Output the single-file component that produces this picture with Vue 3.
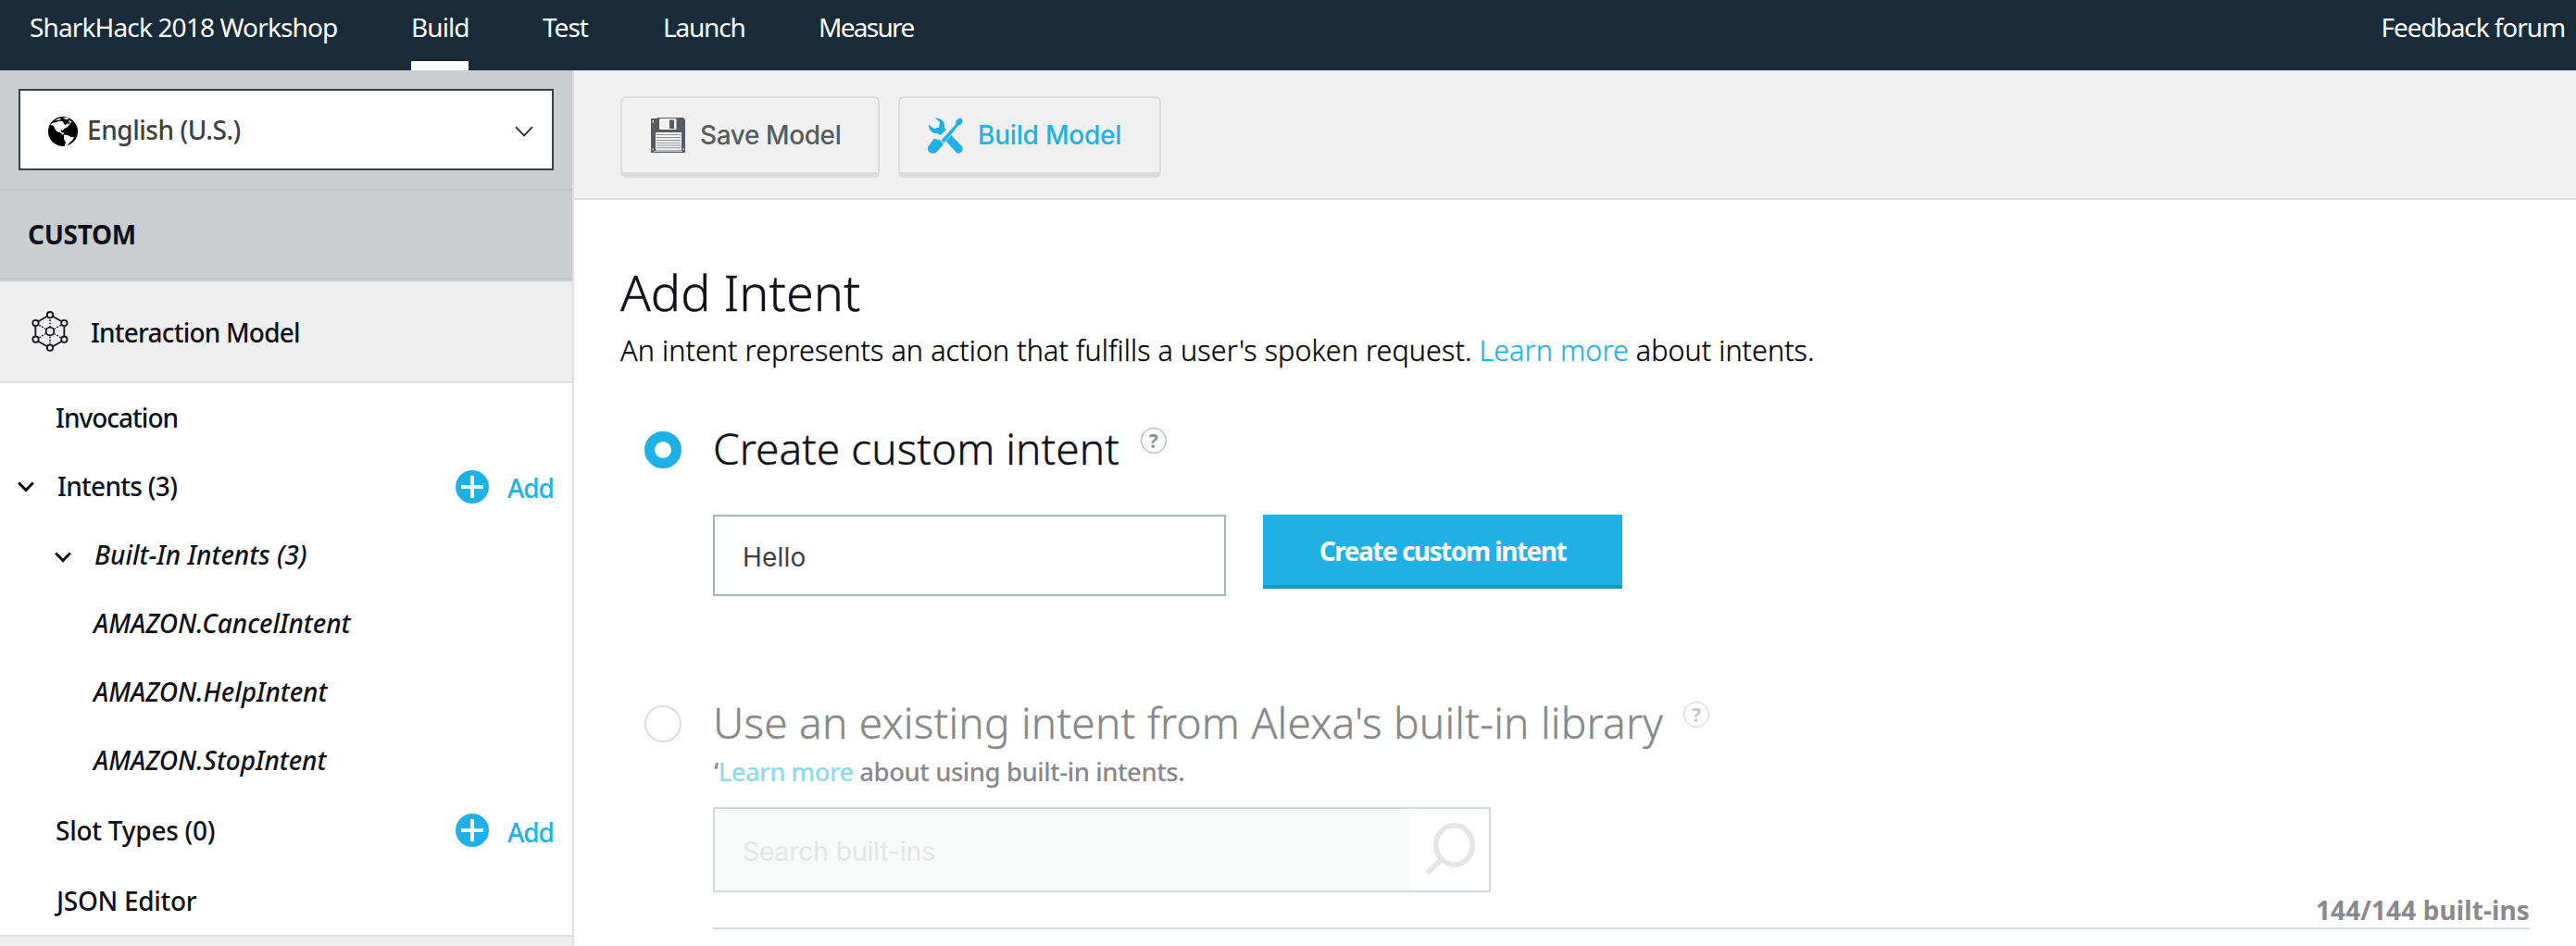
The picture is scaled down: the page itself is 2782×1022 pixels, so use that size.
<script setup>
import { ref } from 'vue'

const tabs = [
  { label: 'Build', cls: 'tab-build', active: true },
  { label: 'Test', cls: 'tab-test' },
  { label: 'Launch', cls: 'tab-launch' },
  { label: 'Measure', cls: 'tab-measure' },
]

const items = [
  { label: 'Invocation', cls: 'invocation' },
  { label: 'Intents (3)', cls: 'intents', open: true, add: true },
  { label: 'Built-In Intents (3)', cls: 'builtin', open: true },
  { label: 'AMAZON.CancelIntent', cls: 'leaf' },
  { label: 'AMAZON.HelpIntent', cls: 'leaf' },
  { label: 'AMAZON.StopIntent', cls: 'leaf' },
  { label: 'Slot Types (0)', cls: 'slots', add: true },
  { label: 'JSON Editor', cls: 'json' },
]

const intentName = ref('Hello')
</script>

<template>
  <div class="app">
    <header class="topbar">
      <span class="brand">SharkHack 2018 Workshop</span>
      <nav class="tabs">
        <a v-for="t in tabs" :key="t.label" class="tab" :class="[t.cls, { active: t.active }]">{{ t.label }}</a>
      </nav>
      <a class="feedback">Feedback forum</a>
    </header>

    <div class="body">
      <aside class="sidebar">
        <div class="lang">
          <div class="select">
            <svg class="globe" width="32" height="32" viewBox="0 0 96 96">
              <circle cx="48" cy="48" r="48" fill="#000" />
              <path fill="#fff" d="M7 27 L14 20 L24 19 L34 15 L45 14 L51 20 L61 17 L72 21 L67 29 L60 35 L52 39 L47 45 L43 43 L40 48 L45 52 L53 53 L48 59 L39 52 L29 49 L21 39 L18 29 Z" />
              <path fill="#fff" d="M22 13 L35 6 L43 6 L36 11 Z M47 4 L62 3 L68 8 L57 9 Z M67 11 L76 16 L73 22 L68 17 Z M51 59 L62 59 L72 65 L84 67 L78 78 L70 84 L61 95 L53 96 L57 83 L51 73 Z" />
              <path d="M51 23 L60 14 L66 21 L60 20 L54 26" fill="none" stroke="#000" stroke-width="4" />
            </svg>
            <span class="lang-text">English (U.S.)</span>
            <svg class="lang-chev" width="20" height="12" viewBox="0 0 20 12">
              <path d="M1 1.2 L10 10.4 L19 1.2" fill="none" stroke="#222a2c" stroke-width="1.8" />
            </svg>
          </div>
        </div>
        <div class="custom">CUSTOM</div>
        <div class="model">
          <svg width="40" height="44" viewBox="0 0 120 132" fill="none" stroke="#16161f" stroke-width="5.5">
            <path d="M51 17 L22 34 M69 17 L98 34 M106 50 V82 M98 98 L69 115 M51 115 L22 98 M13 50 V82" />
            <path d="M60 28 V51 M60 83 V106 M25 46 L46 58 M95 46 L74 58 M25 86 L46 74 M95 86 L74 74" stroke-width="4.5" stroke-dasharray="5 5" />
            <circle cx="60" cy="12.500" r="9.500" /><circle cx="106" cy="39" r="9.500" />
            <circle cx="106" cy="92" r="9.500" /><circle cx="60" cy="119" r="9.500" />
            <circle cx="13.500" cy="92" r="9.500" /><circle cx="13.500" cy="39" r="9.500" />
            <circle cx="60" cy="66" r="13" />
          </svg>
          <span>Interaction Model</span>
        </div>
        <ul class="tree">
          <li v-for="i in items" :key="i.label" class="item" :class="i.cls">
            <svg v-if="i.open" class="chev" width="18" height="12" viewBox="0 0 18 12">
              <path d="M1.200 1.500 L9 9.500 L16.800 1.500" fill="none" stroke="#101018" stroke-width="3" />
            </svg>
            <span class="label">{{ i.label }}</span>
            <a v-if="i.add" class="add">
              <svg width="36" height="36" viewBox="0 0 36 36">
                <circle cx="18" cy="18" r="18" fill="#1fb1e6" />
                <path d="M18 6 V30 M6 18 H30" stroke="#fff" stroke-width="4" />
              </svg>
              <span>Add</span>
            </a>
          </li>
        </ul>
        <div class="rest"></div>
      </aside>

      <main class="main">
        <div class="toolbar">
          <button class="tool save">
            <svg width="38" height="39" viewBox="0 0 38 39">
              <path fill="#565b5f" d="M0 1 H6 L8 0 H35 L37 2 V38 H0 Z" />
              <rect x="9" y="1" width="18.500" height="12" rx="1" fill="#f1f1f1" />
              <rect x="20" y="2.500" width="5" height="9.500" fill="#565b5f" />
              <rect x="5" y="16" width="28" height="19.500" fill="#f4f4f4" />
              <path d="M6 18.500 H32 M6 21.500 H32 M6 24.500 H32 M6 27.300 H32 M6 30 H32 M6 32.700 H32" stroke="#8d9093" stroke-width="1.100" />
              <path d="M1.500 3 H3 V5.500 H1.500 Z M1.500 33.500 H3 V35 H1.500 Z M34.500 33.500 H36 V35 H34.500 Z M3 36.300 H34 V37 H3 Z" fill="#e4e4e4" />
            </svg>
            <span>Save Model</span>
          </button>
          <button class="tool build">
            <svg width="38" height="39" viewBox="0 0 38 39" fill="#1fb1e6">
              <path d="M8 0.500 C14 0 18.500 4 18 10.500 L19.500 14 L13.500 19 L10.500 17.200 C4.500 17.500 1 13.500 1 7.500 L6.500 12 L12 10.500 L13 5 Z" />
              <path d="M18 23.500 L24.500 18.200 L37 31.500 C39 35 36 39.500 31.500 38.500 Z" />
              <path d="M36.500 1 L37.500 3 L36.500 7 L32.500 9 L17.500 27.500 L14.500 24.800 L30 7.500 L30.500 3.500 L34 0.800 Z" stroke="#f1f1f1" stroke-width="1.200" paint-order="stroke" />
              <path d="M7 22.500 L9.500 23.500 L15.500 29.500 L15 31.500 L8.500 38 C3.500 40.500 -1 37 0.300 31.500 Z" />
              <path d="M12 23.500 L17 28.700 L15 30.500 L10 25.500 Z" />
            </svg>
            <span>Build Model</span>
          </button>
        </div>

        <div class="content">
          <h1>Add Intent</h1>
          <p class="desc"><span class="d1">An intent represents an action that fulfills a user's spoken request.</span> <a class="d2">Learn more</a> <span class="d3">about intents.</span></p>

          <section class="option first">
            <div class="head">
              <span class="radio on"></span>
              <h2>Create custom intent</h2>
              <span class="help">?</span>
            </div>
            <div class="form">
              <div class="input">{{ intentName }}</div>
              <button class="create">Create custom intent</button>
            </div>
          </section>

          <section class="option second">
            <div class="head">
              <span class="radio"></span>
              <h2>Use an existing intent from Alexa's built-in library</h2>
              <span class="help">?</span>
            </div>
            <div class="panel">
              <p class="note">‘<a>Learn more</a> about using built-in intents.</p>
              <div class="search">
                <div class="field">Search built-ins</div>
                <svg width="84" height="88" viewBox="0 0 84 88" fill="none" stroke="#e5e5e5">
                  <ellipse cx="46.500" cy="39" rx="19.800" ry="21.200" stroke-width="5.500" />
                  <path d="M32.500 54.500 L17.500 69.500" stroke-width="5.500" />
                </svg>
              </div>
              <div class="count">144/144 built-ins</div>
            </div>
          </section>
        </div>
      </main>
    </div>
  </div>
</template>

<style>
html, body { margin: 0; background: #fff; overflow: hidden; }
</style>

<style scoped>
.app { width: 2782px; height: 1022px; overflow: hidden; display: flex; flex-direction: column; font-family: "Noto Sans", sans-serif; font-size: 28px; color: #101018; background: #fff; }
.app * { box-sizing: border-box; }
h1, h2, p, ul { margin: 0; padding: 0; list-style: none; }
button { margin: 0; font: inherit; cursor: pointer; }
span, a, h1, h2, button { white-space: nowrap; }

.topbar { flex: none; height: 76px; display: flex; background: #192b38; color: #fff; line-height: 58px; padding: 0 12px 0 32px; }
.brand { width: 412px; letter-spacing: -0.86px; }
.tabs { display: flex; }
.tab { position: relative; height: 76px; }
.tab-build { width: 142px; letter-spacing: -0.9px; }
.tab-test { width: 130px; letter-spacing: -1px; }
.tab-launch { width: 168px; letter-spacing: -1.2px; }
.tab-measure { letter-spacing: -1.7px; }
.tab.active::after { content: ""; position: absolute; left: 0; bottom: 0; width: 62px; height: 10px; background: #fff; }
.feedback { margin-left: auto; letter-spacing: -1.08px; }

.body { flex: 1; display: flex; min-height: 0; }
.sidebar { flex: none; width: 620px; border-right: 2px solid #e0e0e0; display: flex; flex-direction: column; }
.lang { flex: none; height: 130px; padding: 20px; background: #cacece; border-bottom: 2px solid #c2c2c4; }
.select { width: 578px; height: 88px; display: flex; align-items: center; background: #fff; border: 2px solid #3a4142; padding: 0 20px 0 30px; }
.globe { margin-top: 4px; }
.lang-text { margin-left: 10px; font-weight: 500; color: #3a4043; letter-spacing: -0.46px; }
.lang-chev { margin-left: auto; margin-top: 3px; }
.custom { flex: none; height: 98px; line-height: 94px; padding-left: 30px; font-weight: 700; letter-spacing: -0.3px; background: #cacece; border-bottom: 2px solid #cacece; box-shadow: inset 0 -2px 0 #c2c2c4; }
.model { flex: none; height: 110px; display: flex; align-items: center; padding-left: 34px; background: #efefef; border-bottom: 2px solid #e0e0e0; font-weight: 500; }
.model span { margin-left: 24px; padding-top: 2px; letter-spacing: -0.8px; }

.tree { flex: none; }
.item { height: 74px; display: flex; align-items: center; font-weight: 500; }
.item .chev { flex: none; margin-top: 2px; }
.invocation { padding-left: 60px; letter-spacing: -1px; }
.intents { padding-left: 19px; }
.intents .label { margin-left: 25px; letter-spacing: -0.7px; }
.builtin { padding-left: 59px; }
.builtin .chev { margin-top: 6px; }
.builtin .label { margin-left: 25px; font-style: italic; letter-spacing: 0; }
.leaf { padding-left: 101px; font-style: italic; letter-spacing: -0.05px; }
.slots { height: 78px; padding-left: 60px; letter-spacing: -0.25px; }
.json { padding-left: 61px; letter-spacing: -0.3px; }
.add { margin-left: auto; width: 126px; display: flex; align-items: center; color: #1fb1e6; letter-spacing: -1.1px; }
.intents .add svg { margin-top: 2px; }
.add span { margin-left: 20px; padding-top: 4px; }
.rest { flex: 1; background: #efefef; border-top: 2px solid #e0e0e0; }

.main { flex: 1; min-width: 0; }
.toolbar { height: 140px; display: flex; gap: 20px; padding: 28px 0 0 50px; background: #f1f1f1; border-bottom: 2px solid #dcdcdc; }
.tool { height: 88px; display: flex; align-items: center; background: #f1f1f1; border: 2px solid #dcdcdc; border-bottom-width: 6px; border-radius: 6px; font-family: Inter, sans-serif; font-weight: 450; }
.save { width: 280px; padding: 0 0 0 31px; color: #575c5f; }
.save span { margin-left: 15px; letter-spacing: -0.4px; }
.build { width: 284px; padding: 0 0 0 30px; color: #1fb1e6; }
.build span { margin-left: 16px; letter-spacing: -0.2px; }

.content { padding-left: 50px; }
h1 { padding-top: 69px; font-size: 54px; line-height: 60px; font-weight: 300; letter-spacing: 0; -webkit-text-stroke: 0.4px currentColor; }
.desc { margin-top: 3px; font-size: 30.5px; line-height: 60px; font-weight: 300; white-space: nowrap; color: #000; -webkit-text-stroke: 0.3px currentColor; }
.d1 { letter-spacing: 0.1px; }
.d2 { letter-spacing: 0.1px; color: #1fb1e6; }
.d3 { letter-spacing: 0.05px; }

.head { height: 60px; display: flex; align-items: center; padding-left: 26px; }
.radio { flex: none; width: 40px; height: 40px; border-radius: 50%; border: 2px solid #dcdce0; }
.radio.on { border: 11px solid #1fb1e6; }
h2 { margin-left: 34px; padding-bottom: 4px; font-size: 46px; line-height: 56px; font-weight: 300; letter-spacing: 0.05px; -webkit-text-stroke: 0.4px currentColor; }
.help { width: 28px; height: 28px; margin-bottom: 20px; border: 1.500px solid #96a2a5; border-radius: 50%; color: #879497; font-size: 21px; line-height: 26px; font-weight: 700; text-align: center; }
.first .help { margin-left: 23px; }
.first { margin-top: 48px; }
.form { display: flex; gap: 40px; align-items: flex-start; padding: 40px 0 0 100px; }
.input { width: 554px; height: 88px; padding: 2px 0 0 30px; line-height: 84px; border: 2px solid #a9b6b6; font-family: Inter, sans-serif; color: #3a4043; letter-spacing: 0.2px; }
.create { width: 388px; height: 80px; padding: 2px 0 0; border: 0; border-bottom: 4px solid #1a98c4; background: #1fb1e6; color: #fff; font-size: 28px; font-weight: 680; letter-spacing: -1.5px; line-height: 70px; }

.second { margin-top: 108px; }
.second h2 { color: #888; letter-spacing: 0.22px; }
.second .help { margin-left: 22px; border-color: #cbd1d1; color: #c3c9cb; }
.panel { width: 2062px; padding-left: 100px; }
.note { margin-top: 2px; padding-left: 1px; line-height: 40px; font-size: 27.500px; font-weight: 550; color: #88878c; letter-spacing: -0.45px; }
.note a { color: #8fd8f2; letter-spacing: -0.6px; }
.search { margin-top: 18px; width: 840px; height: 92px; display: flex; border: 2px solid #d4d8dc; }
.field { flex: 1; padding: 2px 0 0 30px; line-height: 88px; background: #f9fbfa; color: #e5e5e5; font-family: Inter, sans-serif; }
.count { line-height: 39px; height: 40px; border-bottom: 2px solid #d7dce0; text-align: right; font-weight: 700; color: #8a898e; letter-spacing: 0.1px; }
</style>
